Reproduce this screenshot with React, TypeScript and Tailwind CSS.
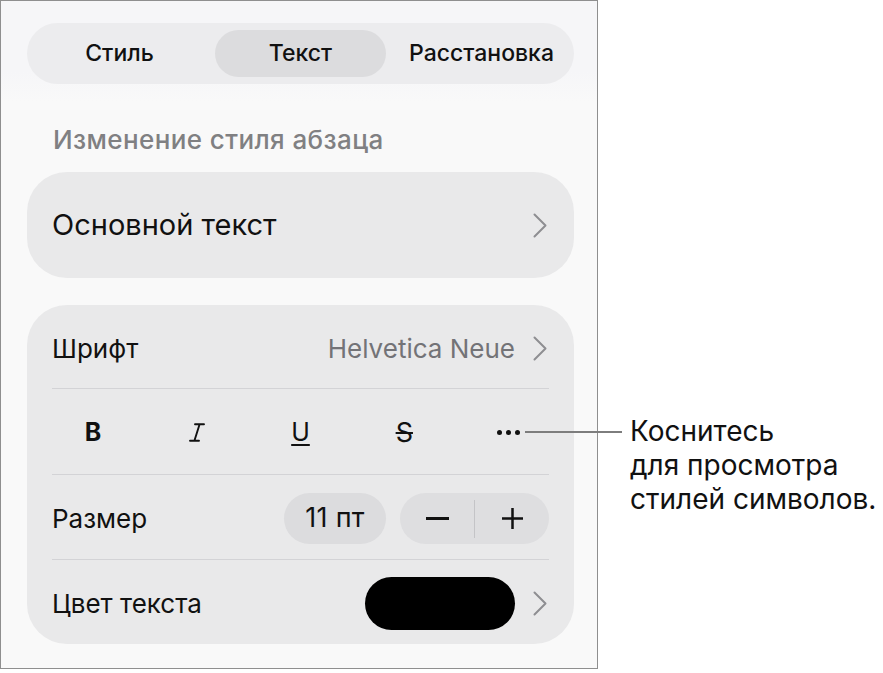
import React from "react";

function Chevron() {
  return (
    <svg width="14" height="25" viewBox="0 0 14 25" fill="none" className="shrink-0">
      <polyline points="1.5,1.5 12.5,12.5 1.5,23.5" stroke="#8e8e92" strokeWidth="2" strokeLinecap="round" strokeLinejoin="round" />
    </svg>
  );
}

function ItalicIcon() {
  return (
    <svg width="16" height="19" viewBox="0 0 16 19" fill="none">
      <path d="M6 1.2h9M1 17.8h9M10.6 1.2 5.4 17.8" stroke="#111" strokeWidth="1.9" strokeLinecap="round" />
    </svg>
  );
}

function Divider() {
  return <div className="mx-[25px] h-px bg-[#d3d3d6]" />;
}

const tabs = ["Стиль", "Текст", "Расстановка"];

export default function App() {
  return (
    <div className="relative w-[883px] h-[673px] bg-white font-['Inter','Liberation_Sans',sans-serif] text-[#111]">
      <div className="w-[598px] h-[669px] border border-[#8f8f8f] bg-[#f9f9f9] flex flex-col">
        {/* Tabs */}
        <div className="pl-[26px] pr-[23px] pt-[22px] pb-[18px] bg-[linear-gradient(to_bottom,#f6f6f8_70%,#f9f9f9)]">
          <div className="grid grid-cols-3 gap-[10px] p-[7px] rounded-full bg-[#ececee] h-[61px]">
            {tabs.map((t) => (
              <div
                key={t}
                className={
                  "flex items-center justify-center rounded-full text-[23px] font-medium " +
                  (t === "Текст" ? "bg-[#dcdcde]" : "")
                }
              >
                {t}
              </div>
            ))}
          </div>
        </div>

        {/* Paragraph style */}
        <div className="px-[52px] h-[70px] pt-[4px] flex items-center text-[26px] tracking-[0.4px] font-medium text-[#808082]">
          Изменение стиля абзаца
        </div>
        <div className="pl-[26px] pr-[23px]">
          <div className="h-[106px] rounded-[40px] bg-[#e9e9ea] flex items-center justify-between pl-[25px] pr-[27px]">
            <span className="text-[29px]">Основной текст</span>
            <Chevron />
          </div>
        </div>

        {/* Character settings */}
        <div className="pl-[26px] pr-[23px] pt-[27px]">
          <div className="rounded-[40px] bg-[#e9e9ea] flex flex-col">
            <div className="h-[83px] pt-[3px] flex items-center justify-between pl-[25px] pr-[27px]">
              <span className="text-[26px]">Шрифт</span>
              <div className="flex items-center gap-[18px]">
                <span className="text-[26px] text-[#737377]">Helvetica Neue</span>
                <Chevron />
              </div>
            </div>
            <Divider />
            <div className="h-[85px] pt-[2px] grid grid-cols-5 items-center px-[14px]">
              <div className="flex justify-center text-[25px] font-bold leading-none">B</div>
              <div className="flex justify-center">
                <ItalicIcon />
              </div>
              <div className="flex justify-center">
                <span className="text-[25px] underline underline-offset-[3px] decoration-[2px] leading-none">U</span>
              </div>
              <div className="flex justify-center">
                <span className="text-[27px] line-through decoration-[2px] leading-none">S</span>
              </div>
              <div className="flex justify-center gap-[4px]">
                <span className="w-[5px] h-[5px] rounded-full bg-[#111]" />
                <span className="w-[5px] h-[5px] rounded-full bg-[#111]" />
                <span className="w-[5px] h-[5px] rounded-full bg-[#111]" />
              </div>
            </div>
            <Divider />
            <div className="h-[84px] pt-[3px] flex items-center justify-between pl-[25px] pr-[25px]">
              <span className="text-[26px]">Размер</span>
              <div className="flex items-center gap-[14px]">
                <div className="w-[102px] h-[51px] rounded-full bg-[#dcdcde] flex items-center justify-center text-[27px] tracking-[0.3px]">
                  11 пт
                </div>
                <div className="w-[149px] h-[51px] rounded-full bg-[#dedee0] flex items-center">
                  <div className="flex-1 flex justify-center">
                    <span className="w-[23px] h-[2.5px] bg-[#111]" />
                  </div>
                  <span className="w-px h-[38px] bg-[#c4c4c7]" />
                  <div className="flex-1 flex justify-center">
                    <svg width="23" height="23" viewBox="0 0 23 23">
                      <path d="M11.5 1v21M1 11.5h21" stroke="#111" strokeWidth="2.5" />
                    </svg>
                  </div>
                </div>
              </div>
            </div>
            <Divider />
            <div className="h-[84px] pt-[2px] flex items-center justify-between pl-[25px] pr-[27px]">
              <span className="text-[26px]">Цвет текста</span>
              <div className="flex items-center gap-[18px]">
                <div className="w-[150px] h-[53px] rounded-full bg-black" />
                <Chevron />
              </div>
            </div>
          </div>
        </div>
      </div>

      {/* Callout */}
      <div className="absolute left-[525px] top-[414px] flex items-start">
        <div className="w-[97px] h-[2px] bg-[#7d7d7d] mt-[17px]" />
        <div className="ml-[8px] text-[28px] leading-[34px]">
          Коснитесь
          <br />
          для просмотра
          <br />
          стилей символов.
        </div>
      </div>
    </div>
  );
}
